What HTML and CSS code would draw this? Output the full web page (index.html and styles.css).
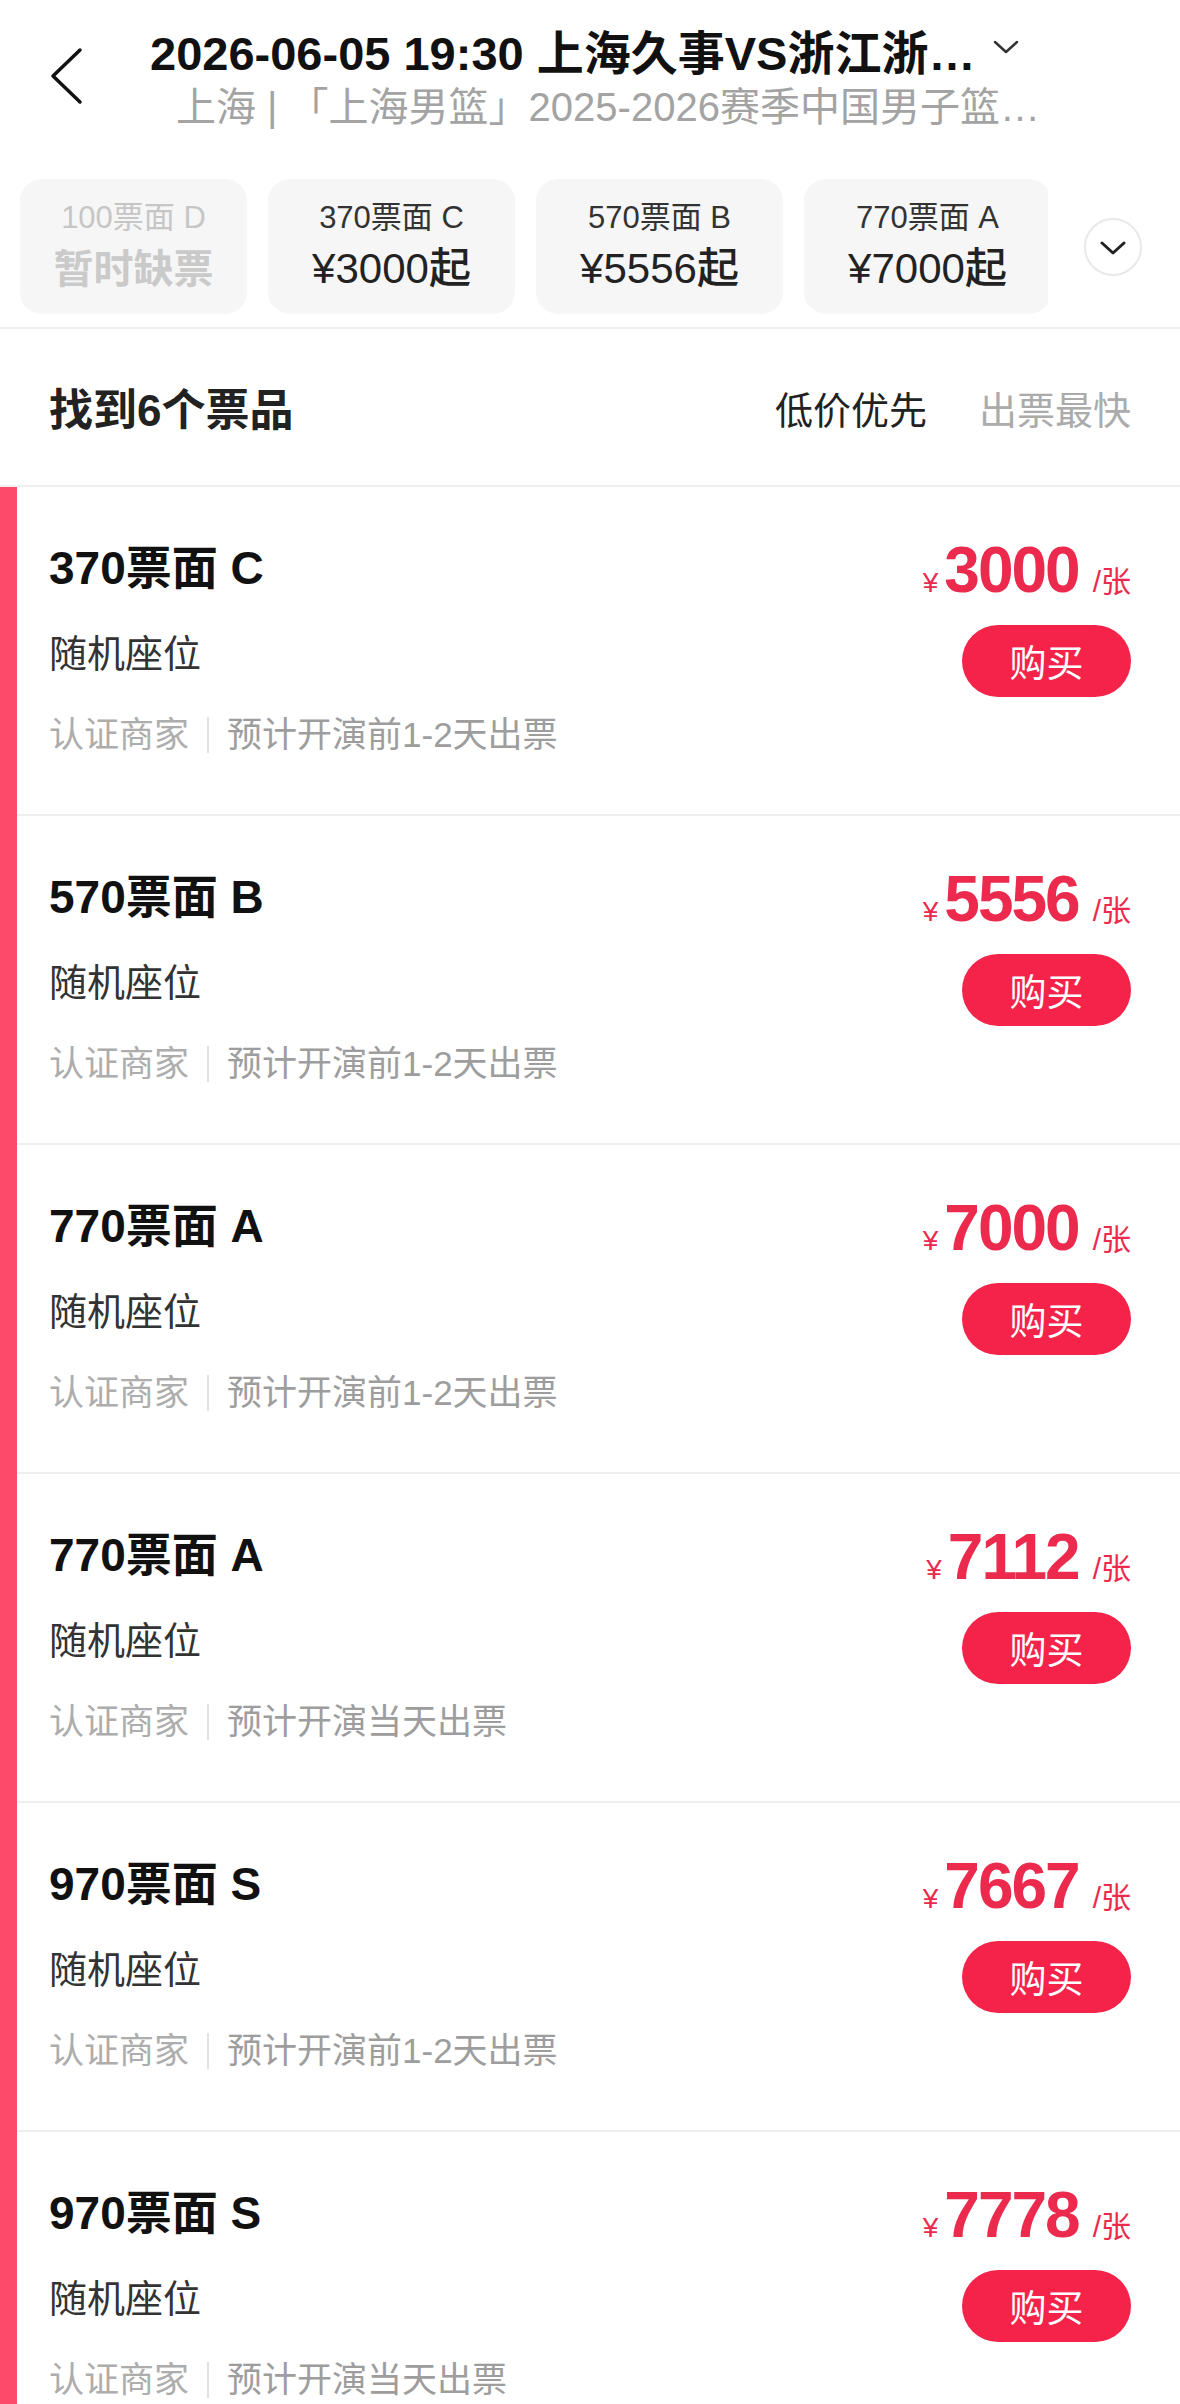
FILE: index.html
```html
<!DOCTYPE html>
<html lang="zh-CN">

<head>
    <meta charset="UTF-8">
    <meta name="viewport" content="width=device-width, initial-scale=1.0">
    <title>选择票品</title>
    <link rel="stylesheet" href="styles.css">
</head>

<body>
    <header class="topbar">
        <button class="back" aria-label="返回">
            <svg width="44" height="60" viewBox="0 0 44 60">
                <path d="M36 4 L9 30 L36 56" fill="none" stroke="#111" stroke-width="3.5" stroke-linecap="round" stroke-linejoin="round" />
            </svg>
        </button>
        <div class="event">
            <div class="event-title">
                <span>2026-06-05 19:30 上海久事VS浙江浙…</span>
                <svg class="caret" width="26" height="14" viewBox="0 0 26 14">
                    <path d="M2 2 L13 12 L24 2" fill="none" stroke="#333" stroke-width="2.5" stroke-linecap="round" stroke-linejoin="round" />
                </svg>
            </div>
            <div class="event-sub">上海 | 「上海男篮」2025-2026赛季中国男子篮…</div>
        </div>
    </header>

    <nav class="tiers">
        <div class="tier-list">
            <div class="tier tier-off">
                <div class="tier-name">100票面 D</div>
                <div class="tier-price">暂时缺票</div>
            </div>
            <div class="tier">
                <div class="tier-name">370票面 C</div>
                <div class="tier-price">¥3000起</div>
            </div>
            <div class="tier">
                <div class="tier-name">570票面 B</div>
                <div class="tier-price">¥5556起</div>
            </div>
            <div class="tier">
                <div class="tier-name">770票面 A</div>
                <div class="tier-price">¥7000起</div>
            </div>
        </div>
        <button class="more" aria-label="展开">
            <svg width="26" height="14" viewBox="0 0 26 14">
                <path d="M2 2 L13 12 L24 2" fill="none" stroke="#222" stroke-width="3" stroke-linecap="round" stroke-linejoin="round" />
            </svg>
        </button>
    </nav>

    <section class="list-head">
        <h2>找到6个票品</h2>
        <div class="sort">
            <span class="sort-on">低价优先</span>
            <span>出票最快</span>
        </div>
    </section>

    <main class="tickets">
        <div class="ticket">
            <div class="ticket-info">
                <div class="ticket-name">370票面 C</div>
                <div class="ticket-seat">随机座位</div>
                <div class="ticket-meta"><span>认证商家</span><i></i><span>预计开演前1-2天出票</span></div>
            </div>
            <div class="ticket-buy">
                <div class="price"><span class="cur">¥</span><b>3000</b><span class="unit">/张</span></div>
                <button class="buy">购买</button>
            </div>
        </div>
        <div class="ticket">
            <div class="ticket-info">
                <div class="ticket-name">570票面 B</div>
                <div class="ticket-seat">随机座位</div>
                <div class="ticket-meta"><span>认证商家</span><i></i><span>预计开演前1-2天出票</span></div>
            </div>
            <div class="ticket-buy">
                <div class="price"><span class="cur">¥</span><b>5556</b><span class="unit">/张</span></div>
                <button class="buy">购买</button>
            </div>
        </div>
        <div class="ticket">
            <div class="ticket-info">
                <div class="ticket-name">770票面 A</div>
                <div class="ticket-seat">随机座位</div>
                <div class="ticket-meta"><span>认证商家</span><i></i><span>预计开演前1-2天出票</span></div>
            </div>
            <div class="ticket-buy">
                <div class="price"><span class="cur">¥</span><b>7000</b><span class="unit">/张</span></div>
                <button class="buy">购买</button>
            </div>
        </div>
        <div class="ticket">
            <div class="ticket-info">
                <div class="ticket-name">770票面 A</div>
                <div class="ticket-seat">随机座位</div>
                <div class="ticket-meta"><span>认证商家</span><i></i><span>预计开演当天出票</span></div>
            </div>
            <div class="ticket-buy">
                <div class="price"><span class="cur">¥</span><b>7112</b><span class="unit">/张</span></div>
                <button class="buy">购买</button>
            </div>
        </div>
        <div class="ticket">
            <div class="ticket-info">
                <div class="ticket-name">970票面 S</div>
                <div class="ticket-seat">随机座位</div>
                <div class="ticket-meta"><span>认证商家</span><i></i><span>预计开演前1-2天出票</span></div>
            </div>
            <div class="ticket-buy">
                <div class="price"><span class="cur">¥</span><b>7667</b><span class="unit">/张</span></div>
                <button class="buy">购买</button>
            </div>
        </div>
        <div class="ticket">
            <div class="ticket-info">
                <div class="ticket-name">970票面 S</div>
                <div class="ticket-seat">随机座位</div>
                <div class="ticket-meta"><span>认证商家</span><i></i><span>预计开演当天出票</span></div>
            </div>
            <div class="ticket-buy">
                <div class="price"><span class="cur">¥</span><b>7778</b><span class="unit">/张</span></div>
                <button class="buy">购买</button>
            </div>
        </div>
    </main>
</body>

</html>
```

FILE: styles.css
```css
* {
    box-sizing: border-box;
}

body {
    margin: 0;
    width: 1180px;
    background: #fff;
    color: #111;
    font-family: "Liberation Sans", "Noto Sans CJK SC", sans-serif;
    overflow: hidden;
}

button {
    font: inherit;
    border: 0;
    background: none;
    padding: 0;
    cursor: pointer;
}

/* top bar */
.topbar {
    display: flex;
    align-items: flex-start;
    height: 180px;
}

.back {
    width: 150px;
    padding-left: 44px;
    margin-top: 46px;
    display: flex;
}

.event {
    padding-top: 21px;
}

.event-title {
    display: flex;
    align-items: center;
    height: 56px;
    font-size: 47px;
    font-weight: 700;
    color: #111;
    white-space: nowrap;
}

.caret {
    margin-left: 18px;
    margin-bottom: 4px;
}

.event-sub {
    margin-top: 4px;
    padding-left: 26px;
    line-height: 52px;
    font-size: 40px;
    color: #a3a3a3;
    white-space: nowrap;
}

/* ticket tiers */
.tiers {
    display: flex;
    align-items: center;
    padding: 0 38px 0 20px;
    height: 149px;
    padding-bottom: 14px;
    border-bottom: 2px solid #efefef;
}

.tier-list {
    display: flex;
    gap: 21px;
    flex: 1;
    overflow: hidden;
}

.tier {
    flex: none;
    width: 247px;
    height: 135px;
    padding-top: 19px;
    border-radius: 22px;
    background: #f6f6f6;
    text-align: center;
    white-space: nowrap;
}

.tier-name {
    line-height: 40px;
    font-size: 31px;
    color: #333;
}

.tier-price {
    margin-top: 6px;
    line-height: 50px;
    font-size: 42px;
    font-weight: 500;
    color: #222;
}

.tier-off {
    width: 227px;
}

.tier-off .tier-name {
    color: #c6c6c6;
}

.tier-off .tier-price {
    font-weight: 700;
    font-size: 40px;
    color: #cacaca;
}

.more {
    flex: none;
    width: 58px;
    height: 58px;
    margin-left: 36px;
    border: 2px solid #e9e9e9;
    border-radius: 50%;
    display: flex;
    align-items: center;
    justify-content: center;
    padding-top: 3px;
}

/* list header */
.list-head {
    display: flex;
    align-items: center;
    justify-content: space-between;
    height: 158px;
    padding: 0 49px;
    border-bottom: 2px solid #efefef;
}

.list-head h2 {
    margin: 0;
    font-size: 44px;
    font-weight: 700;
    color: #222;
}

.sort {
    display: flex;
    gap: 52px;
    font-size: 38px;
    color: #ababab;
}

.sort-on {
    color: #222;
}

/* tickets */
.tickets {
    border-left: 17px solid #fd4a6b;
}

.ticket {
    display: flex;
    justify-content: space-between;
    height: 329px;
    padding: 0 49px 0 32px;
    border-bottom: 2px solid #efefef;
}

.ticket-info {
    padding-top: 51px;
}

.ticket-name {
    line-height: 60px;
    font-size: 46px;
    font-weight: 700;
    color: #111;
}

.ticket-seat {
    margin-top: 30px;
    line-height: 52px;
    font-size: 38px;
    color: #333;
}

.ticket-meta {
    display: flex;
    align-items: center;
    margin-top: 30px;
    line-height: 50px;
    font-size: 35px;
    color: #9d9d9d;
}

.ticket-meta span:first-child {
    color: #adadad;
}

.ticket-meta i {
    width: 2px;
    height: 36px;
    margin: 0 18px;
    background: #e2e2e2;
}

.ticket-buy {
    display: flex;
    flex-direction: column;
    align-items: flex-end;
    padding-top: 48px;
}

.price {
    display: flex;
    align-items: baseline;
    height: 70px;
    line-height: 70px;
    color: #ec2a4d;
}

.price .cur {
    font-size: 28px;
    margin-right: 6px;
}

.price b {
    font-size: 64px;
    letter-spacing: -2px;
}

.price .unit {
    margin-left: 14px;
    font-size: 30px;
}

.buy {
    margin-top: 20px;
    width: 169px;
    height: 72px;
    border-radius: 36px;
    background: #f5234a;
    color: #fff;
    font-size: 37px;
}
```
